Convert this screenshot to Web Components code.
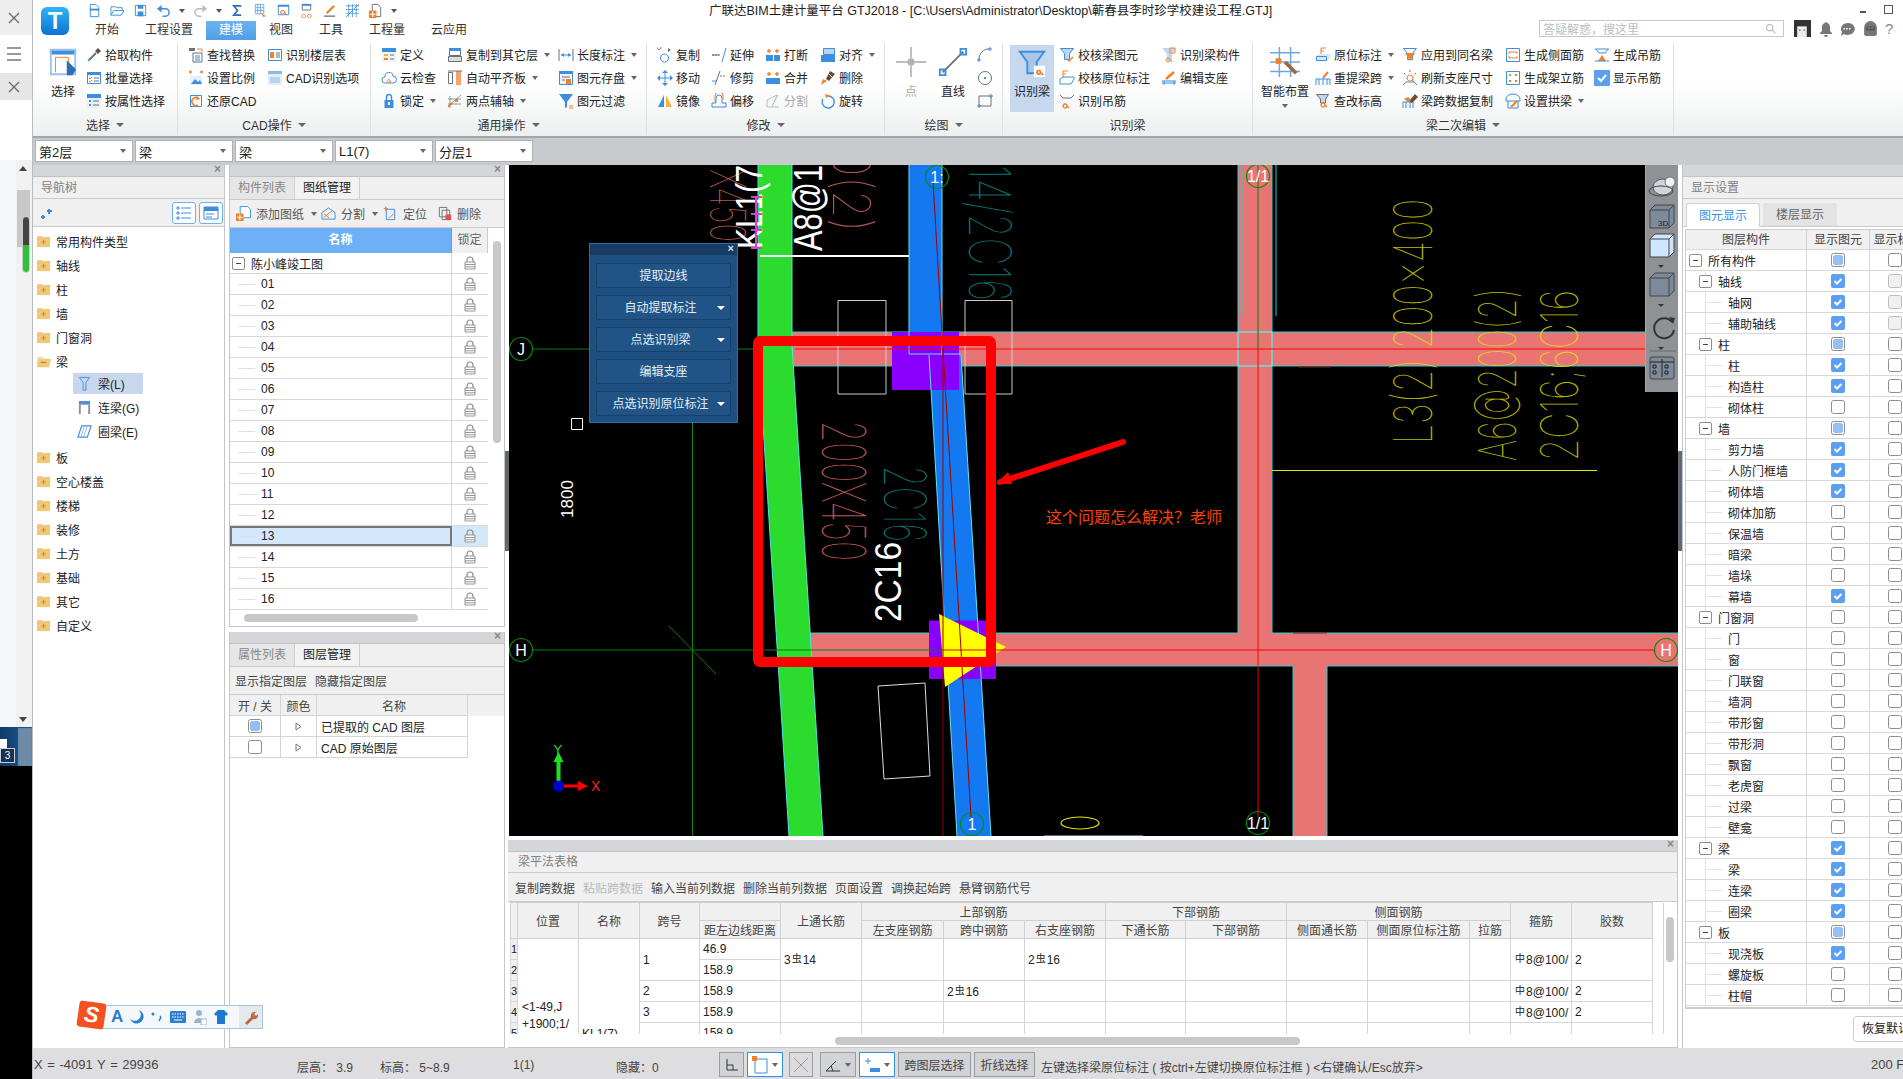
<!DOCTYPE html>
<html lang="zh">
<head>
<meta charset="utf-8">
<title>GTJ2018</title>
<style>
  html, body { margin: 0; height: 100%; overflow: hidden; background: #fff; }
  body { font: 12px "Liberation Sans", "Noto Sans CJK SC", sans-serif; color: #222; }
</style>
</head>
<body>
<gtj-app>
  <gtj-rail slot="rail"></gtj-rail>
  <gtj-titlebar slot="title"></gtj-titlebar>
  <gtj-ribbon slot="ribbon">
    <rb-group label="选择" w="145" pad="7">
      <rb-big icon="select" label="选择" w="46"></rb-big>
      <rb-col>
        <rb-item icon="pick" label="拾取构件"></rb-item>
        <rb-item icon="batch" label="批量选择"></rb-item>
        <rb-item icon="attrsel" label="按属性选择"></rb-item>
      </rb-col>
    </rb-group>
    <rb-group label="CAD操作" w="193" pad="10">
      <rb-col w="79">
        <rb-item icon="replace" label="查找替换"></rb-item>
        <rb-item icon="scale" label="设置比例"></rb-item>
        <rb-item icon="restore" label="还原CAD"></rb-item>
      </rb-col>
      <rb-col>
        <rb-item icon="floortable" label="识别楼层表"></rb-item>
        <rb-item icon="cadopt" label="CAD识别选项"></rb-item>
      </rb-col>
    </rb-group>
    <rb-group label="通用操作" w="276" pad="10">
      <rb-col w="66">
        <rb-item icon="define" label="定义"></rb-item>
        <rb-item icon="cloud" label="云检查"></rb-item>
        <rb-item icon="lockb" label="锁定" arrow></rb-item>
      </rb-col>
      <rb-col w="111">
        <rb-item icon="copyto" label="复制到其它层" arrow></rb-item>
        <rb-item icon="alignslab" label="自动平齐板" arrow></rb-item>
        <rb-item icon="axis2" label="两点辅轴" arrow></rb-item>
      </rb-col>
      <rb-col>
        <rb-item icon="dim" label="长度标注" arrow></rb-item>
        <rb-item icon="save" label="图元存盘" arrow></rb-item>
        <rb-item icon="filter" label="图元过滤"></rb-item>
      </rb-col>
    </rb-group>
    <rb-group label="修改" w="238" pad="10">
      <rb-col w="54">
        <rb-item icon="copy" label="复制"></rb-item>
        <rb-item icon="move" label="移动"></rb-item>
        <rb-item icon="mirror" label="镜像"></rb-item>
      </rb-col>
      <rb-col w="54">
        <rb-item icon="extend" label="延伸"></rb-item>
        <rb-item icon="trim" label="修剪"></rb-item>
        <rb-item icon="offset" label="偏移"></rb-item>
      </rb-col>
      <rb-col w="55">
        <rb-item icon="breaks" label="打断"></rb-item>
        <rb-item icon="merge" label="合并"></rb-item>
        <rb-item icon="split" label="分割" disabled></rb-item>
      </rb-col>
      <rb-col>
        <rb-item icon="alignr" label="对齐" arrow></rb-item>
        <rb-item icon="del" label="删除"></rb-item>
        <rb-item icon="rotate" label="旋转"></rb-item>
      </rb-col>
    </rb-group>
    <rb-group label="绘图" w="118" pad="8">
      <rb-big icon="point" label="点" w="36" disabled></rb-big>
      <rb-big icon="line" label="直线" w="36" ml="6"></rb-big>
      <rb-col w="22" ml="6">
        <rb-item icon="arc"></rb-item>
        <rb-item icon="circle"></rb-item>
        <rb-item icon="rect"></rb-item>
      </rb-col>
    </rb-group>
    <rb-group label="识别梁" w="250" pad="7" plain>
      <rb-big icon="beam" label="识别梁" w="44" active></rb-big>
      <rb-col w="102" ml="5">
        <rb-item icon="checkbeam" label="校核梁图元"></rb-item>
        <rb-item icon="checkorig" label="校核原位标注"></rb-item>
        <rb-item icon="hanger" label="识别吊筋"></rb-item>
      </rb-col>
      <rb-col>
        <rb-item icon="beamcomp" label="识别梁构件"></rb-item>
        <rb-item icon="editsup" label="编辑支座"></rb-item>
      </rb-col>
    </rb-group>
    <rb-group label="梁二次编辑" w="421" pad="7">
      <rb-big icon="smart" label="智能布置" w="50" arrow></rb-big>
      <rb-col w="87" ml="5">
        <rb-item icon="origmark" label="原位标注" arrow></rb-item>
        <rb-item icon="respan" label="重提梁跨" arrow></rb-item>
        <rb-item icon="elev" label="查改标高"></rb-item>
      </rb-col>
      <rb-col w="103">
        <rb-item icon="applysame" label="应用到同名梁"></rb-item>
        <rb-item icon="refresh" label="刷新支座尺寸"></rb-item>
        <rb-item icon="spancopy" label="梁跨数据复制"></rb-item>
      </rb-col>
      <rb-col w="89">
        <rb-item icon="siderebar" label="生成侧面筋"></rb-item>
        <rb-item icon="erect" label="生成架立筋"></rb-item>
        <rb-item icon="arch" label="设置拱梁" arrow></rb-item>
      </rb-col>
      <rb-col>
        <rb-item icon="genhanger" label="生成吊筋"></rb-item>
        <rb-item icon="showcheck" label="显示吊筋"></rb-item>
      </rb-col>
    </rb-group>
  </gtj-ribbon>
  <gtj-combos slot="combos"></gtj-combos>
  <gtj-workspace slot="work">
    <gtj-nav slot="nav"></gtj-nav>
    <gtj-drawings slot="mid"></gtj-drawings>
    <gtj-layers slot="mid"></gtj-layers>
    <gtj-canvas slot="canvas"></gtj-canvas>
    <gtj-beamtable slot="table"></gtj-beamtable>
    <gtj-display slot="right"></gtj-display>
  </gtj-workspace>
  <gtj-status slot="status"></gtj-status>
  <gtj-ime slot="ime"></gtj-ime>
</gtj-app>

<script>
const B = "#3d8ede", O = "#f0802c", K = "#6b7178", L = "#cfe3f8", Y = "#f2b43c";
const line = (d, c = B, w = 1) => `<path d="${d}" fill="none" stroke="${c}" stroke-width="${w}"/>`;
const fill = (d, c = B) => `<path d="${d}" fill="${c}"/>`;

// rough 16x16 versions of the ribbon and tree icons
const ICONS = {
  select: fill("M1 1h14v3H1z") + line("M1.5 1.5h13v13h-13z", "#9cc3ea") + line("M4 5.5h7v8M4 5.5v8", O, .5) + fill("M10 7l5 5-2 3h-3z", "#2f6fb0"),
  pick: line("M3 13l7-7", K, 2) + fill("M9 4l3-3 3 3-3 3z", "#555") + line("M2 14l2-2", B, 1.5),
  batch: line("M1.5 2.5h13v11h-13z") + fill("M1 2h14v3H1z") + line("M3 8l1 1 2-2M3 11l1 1 2-2", O) + line("M8 8h5M8 11h5", K),
  attrsel: fill("M1 1h14v14H1z", "#e8f1fb") + fill("M1 1h14v4H1z") + fill("M3 7h2v2H3zM3 11h2v2H3z") + line("M7 8h6M7 12h6", K),
  replace: fill("M1 1h6v3H1z", K) + line("M9 2h5v3", O) + line("M5 6h9v9H5z", K) + line("M7 9h5M7 11h5M7 13h5", B),
  scale: fill("M2 6h12v9H2z", "#e6f0fa") + fill("M3 14l4-5 3 3 2-2 2 4z", B) + line("M1 2h3M12 2h3", O, 1.5) + line("M2.5 .5v3M13.5 .5v3", O),
  restore: line("M2.5 2.5h11v11h-11z") + line("M11 6a4 4 0 1 0-1 6", O, 1.6) + fill("M9 3l3 3-4 1z", O),
  floortable: fill("M1 2h14v12H1z", "#fff") + line("M1.5 2.5h13v11h-13z") + fill("M3 5h4v6H3z", O) + line("M9 6h4M9 8h4M9 10h4", K),
  cadopt: fill("M1 1h14v14H1z", "#e2edf9") + fill("M1 1h14v3H1z", "#8db9e8") + fill("M3 7h10v6H3z", "#b9d3ef") ,
  define: fill("M1 1h14v14H1z", "#f1f4f7") + fill("M1 1h14v4H1z", B) + fill("M3 7h4v2H3z", Y) + fill("M3 11h4v2H3z", O) + line("M9 8h4M9 12h4", K),
  cloud: line("M4 13a3 3 0 0 1 0-6 4 4 0 0 1 8-1 3.5 3.5 0 0 1 0 7z") + line("M7.5 9.5a1.4 1.4 0 1 0 .1 0M9 11l1 1", O),
  lockb: fill("M3.5 7h9v8h-9z") + line("M5.5 7V4a2.5 2.5 0 0 1 5 0v3", B, 1.5) + fill("M7 9h2v3H7z", "#fff"),
  copyto: line("M2.5 1.5h11v7h-11z", K) + fill("M2 1h12v3H2z", B) + fill("M1 9h14v6H1z", "#d8dde2") + line("M1.5 9.5h13v5h-13z", K),
  alignslab: fill("M9 1h5v14H9z", "#f6a26a") + line("M1.5 2.5h4v11h-4z", K) + line("M1 1h14", K),
  axis2: line("M1 13L14 2M3 3v12M1 6h13M1 11h13", K, .7) + line("M1 14l5-4", O, 1.5) + fill("M8 6h3v3H8z", O),
  dim: line("M1 2v12M15 2v12", K) + line("M3 8h10", B) + fill("M3 8l3-2v4zM13 8l-3-2v4z"),
  save: fill("M1 1h14v14H1z", "#f1f4f7") + line("M1.5 1.5h13v13h-13z") + fill("M1 1h14v3H1z") + line("M4 7h8M4 10h3", K) + fill("M8 9h5v5H8z", O),
  filter: fill("M1 1h14L9 9v5l-2 1V9z") + line("M11 13h4M11 15h4", O),
  copy: line("M2 2.5a2 2 0 1 1 .1 0", K) + line("M7.5 15a4 4 0 1 1 .1 0") + fill("M11 1l3 2-3 2z", K),
  extend: line("M1 8h7", K, 1) + `<path d="M1 8h8" stroke="${K}" stroke-dasharray="2 1"/>` + line("M11 15l4-14"),
  trim: line("M1 11h5", B) + `<path d="M9 6h6" stroke="${K}" stroke-dasharray="2 1"/>` + line("M4 15l5-14", K),
  breaks: fill("M1 8h7v6H1zM9 8h6v6H9z") + line("M4 2v4M2 4h4M12 2v4M10 4h4", O, 1.4),
  merge: fill("M1 8h14v6H1z") + line("M4 2v4M2 4h4M12 2v4M10 4h4", O, 1.4),
  alignr: fill("M3 1h12v7H3z", "#b7d4f2") + line("M3.5 1.5h11v6h-11z") + fill("M1 8h14v7H1z", B),
  move: line("M8 2v12M2 8h12") + fill("M8 0l3 3H5zM8 16l3-3H5zM0 8l3-3v6zM16 8l-3-3v6z"),
  del: fill("M10 1l5 3-6 7-3-2z", "#6b4a33") + line("M9 4l3 3", "#fff") + fill("M1 15l2-6 4 2z", O),
  mirror: fill("M1 14L7 2v12z") + fill("M9 2l6 12H9z", Y),
  offset: line("M1 14V10h4V5a3 3 0 0 1 6 0v5h4v4z") + line("M4 9V3a4 4 0 0 1 8 0v4", O),
  split: line("M2 14h12M2 14V7l10-5-5 12", "#b9bcc0") + line("M9 9l4-7", "#c8cbce", 1.5),
  rotate: line("M8 3a6 6 0 1 1-5 3", B, 1.3) + fill("M5 1l5 1.5L6 5z", O),
  point: line("M8 0v6M8 10v6M0 8h6M10 8h6", "#b9bcc0") + `<circle cx="8" cy="8" r="2" fill="#b0b3b7"/>`,
  line: line("M2.5 13.5l11-11", K) + line("M1 12h3v3H1zM12 1h3v3h-3z"),
  arc: line("M2 13a10 10 0 0 1 11-11", K) + line("M1 12h2v2H1zM12 1h2v2h-2z"),
  circle: `<circle cx="8" cy="8" r="6.5" fill="none" stroke="${K}"/>` + fill("M7 7h2v2H7z"),
  rect: line("M2 3h12v10H2z", K) + line("M1 12h2v2H1zM13 2h2v2h-2z"),
  beam: fill("M1 2h14l-4 6v6H6V8z", "#a9c5e8") + line("M1.5 2.5h13l-4 5.5v6h-5v-6z") + fill("M9 10h6v6H9z", "#fff") + line("M11.5 12.5a1 1 0 1 0 .1 0M13 14l1 1", O),
  checkbeam: fill("M1 1h14l-4 6v5H6V7z", "#bcd8f5") + line("M1.5 1.5h13l-4 5v6h-5v-6z") + line("M8 12l2 2 4-4", O, 1.5),
  checkorig: line("M4 1v6M4 1h5M4 4h3", O) + line("M1 9l3-2h11v2l-3 5H1z") ,
  hanger: line("M1 2l3 3h8l3-3", K) + line("M6 11a2 2 0 1 0 .1 0M8 13l2 2", O, 1.4),
  beamcomp: fill("M1 1h14l-4 6v7H6V7z", "#bcd8f5") + line("M9 1h5v5H9z", O) + line("M7 11a2 2 0 1 0 .1 0M9 13l2 2", O),
  editsup: line("M1 11h14M3 11v4M13 11v4M1 13h14", B) + line("M5 9l8-7", O, 2.4),
  smart: line("M0 3h16M0 8h16M0 13h16M5 0v16M11 0v16", "#6fa8e0", .8) + line("M8 8l6 6", "#9b6a3e", 2) + fill("M3 6h3v3H3z", O),
  origmark: line("M6 1v6M6 1h5M6 4h3", O) + fill("M1 9l3-2h11v5l-3 2H1z", "#d9e8f7") + line("M1.5 9.5h10v4h-10z"),
  respan: line("M1 15V9h14v6M4 9v6M8 9v6M12 9v6") + line("M8 8l5-6", O, 2),
  elev: fill("M1 1h13l-3 5v4H5V6z", "#c7d6e8") + line("M1.5 1.5h12l-3 4.5v4h-5V6z", K) + line("M8 10a2 2 0 1 0 .1 0M10 12l2 2", O, 1.4),
  applysame: line("M1.5 1.5h13l-4 5v6h-5v-6z", B) + fill("M3 6h10l-5 8z", O),
  refresh: line("M8 0v2M2 3l1.5 1.5M14 3l-1.5 1.5", K) + line("M1 15l3-3h8l3 3", B) + line("M8 5a3 3 0 1 0 .1 0M10 10l2 2", O, 1.2),
  spancopy: line("M1 15V9h10v6M4 9v6M8 9v6", B) + fill("M7 8l6-7 3 3-6 6z", "#6b4a33") + fill("M2 6l4-2 3 3-3 2z", O),
  siderebar: line("M1.5 1.5h13v13h-13z") + line("M4 5h8M4 11h8", O) + line("M4 5v2M12 5v2M4 11V9M12 11V9", O),
  erect: line("M1.5 1.5h13v13h-13z") + fill("M4 4h2v2H4zM10 4h2v2h-2zM4 10h2v2H4zM10 10h2v2h-2z", O),
  arch: line("M1 6a7 5 0 0 1 14 0v2H1zM3 8v7h10V8") + line("M6 14l6-6", O, 2),
  genhanger: line("M1 2h14M2 2l3 4h6l3-4", B) + fill("M4 14h8l-4-6z", O) + line("M1 14h14", B),
  showcheck: fill("M1 0h14a1 1 0 0 1 1 1v14a1 1 0 0 1-1 1H1a1 1 0 0 1-1-1V1a1 1 0 0 1 1-1z", "#5a9ff0") + line("M4 8l3 3 5-6", "#fff", 2),
  folder: fill("M1 2h6v2H1z", "#f7dca4") + fill("M1 3h14v11H1z", "#f1c878") + line("M8 6v5M5.5 8.5h5", "#e28b2a", 1.2),
  folderopen: fill("M1 3h7v2H1z", "#f7dca4") + fill("M2 5h14l-2 9H1z", "#f1c878") + line("M5 9h6", "#c98628", 1.4),
  beamL: fill("M2 1h12l-4 6v8H6V7z", "#bcd8f5") + line("M2.5 1.5h11l-4 5.5v8h-3V7z", "#4a90d9") ,
  beamG: fill("M2 1h12v4H2z", "#5b8fc8") + line("M3 5v10M13 5v10", "#8a9097", 2),
  beamE: line("M5 2h10l-4 12H1z", "#4a90d9", 1.3) + line("M8 2L4 14M11 2L7 14", "#8fbce8"),
  add: fill("M4 0h9l3 3v10H4z", "#fff") + line("M4.5 .5h8l3 3v9h-11z") + fill("M0 8h8v8H0z", O) + line("M4 9v6M1 12h6", "#fff", 1.3),
  cut: line("M1 14V7l7-5 7 5v7z") + line("M3 12l9-7M3 8l6 5", O),
  locate: fill("M3 3h10v12H3z", "#e4eff9") + line("M3.5 3.5h9v11h-9z") + line("M6 13l6-5", O) + fill("M3 0l1 2 2 .5-2 1L3 6 2 3.5 0 2.5l2-.5z", O),
  erase: line("M2.5 1.5h8v10h-8z", K) + line("M5.5 4.5h8v10h-8z", K) + fill("M9 9h6v6H9z", "#e2504f"),
  avatar: fill("M0 0h17v17H0z", "#333") + fill("M3 6h9v11H3z", "#eee") + fill("M5 9h1v1H5zM9 9h1v1H9z", "#222"),
  bell: fill("M8 1a1 1 0 0 1 1 1 4 4 0 0 1 3 4v4l2 2v1H2v-1l2-2V6a4 4 0 0 1 3-4 1 1 0 0 1 1-1zM6 14h4a2 2 0 0 1-4 0z", "#777"),
  chat: fill("M8 2a7 6 0 1 1-3 11l-3 2 1-4A7 6 0 0 1 8 2z", "#777") + fill("M4.5 7h1.5v1.500H4.500zM7.300 7h1.500v1.500H7.300zM10 7h1.500v1.500H10z", "#fff"),
  monster: fill("M8 1a6 6 0 0 1 6 6v7l-2 1H4l-2-1V7a6 6 0 0 1 6-6z", "#777") + fill("M4 6h8v4H4z", "#555") + fill("M6 7h1v1H6zM9 7h1v1H9z", "#ddd"),
  glass: line("M7 3a4 4 0 1 0 .1 0M10 10l4 4", "#bbb", 1.4),
  qnew: fill("M3 1h7l3 3v11H3z", "#fff") + line("M3.500 1.500h6l3 3v10h-9z") + fill("M3 6h10v2H3z"),
  qopen: line("M1 13V4h5l1 1h6v3") + line("M1 13l3-5h11l-3 5z"),
  qsave: line("M2.500 2.500h11v11h-11z") + fill("M5 2h6v4H5zM5 9h6v5H5z"),
  qundo: line("M2 6h8a4 4 0 0 1 0 8H7", B, 1.600) + fill("M6 2v8L1 6z"),
  qredo: line("M14 6H6a4 4 0 0 0 0 8h3", "#b6bcc4", 1.600) + fill("M10 2v8l5-4z", "#b6bcc4"),
  qcalc: line("M12 3H4l4 5-4 5h8", "#2f6fb0", 1.800),
  qbuild: line("M2.500 1.500h9v10h-9zM5 1.500v10M8 1.500v10M2.500 5h9M2.500 8h9", B, .7) + fill("M9 11l5 3-3 1z", O),
  qview: line("M2.500 2.500h11v10h-11z") + fill("M2 2h12v2H2z") + line("M7 8a2 2 0 1 0 .1 0M9 10l2 2", O, 1.200),
  qglass: line("M3.500 1.500h9v6h-9z", K) + line("M5 12a2 2 0 1 0 .1 0M11 12a2 2 0 1 0 .1 0", O) + fill("M3 1h10v2H3z", B),
  qpen: line("M2 14h12", K, 1.400) + line("M5 11l8-8", O, 2.400),
  qgrid: line("M1 3h14M1 7h14M1 11h14M4 1v14M8 1v14M12 1v14", B, .8) + line("M1 15L15 1", B, .8),
  qfile: line("M4.500 1.500h6l3 3v10h-9z", K) + fill("M1 8h8v8H1z", O) + line("M5 9v6M2 12h6", "#fff", 1.200)
};

class GtjBase extends HTMLElement {
  constructor() {
    super();
    this.attachShadow({ mode: "open" });
  }
}

class GtjIcon extends GtjBase {
  connectedCallback() {
    const size = this.getAttribute("size") || 16;
    this.shadowRoot.innerHTML = `
      <style>:host { display: inline-flex; flex: none; width: ${size}px; height: ${size}px; } svg { display: block; }</style>
      <svg width="${size}" height="${size}" viewBox="0 0 16 16">${ICONS[this.getAttribute("name")] || ""}</svg>`;
  }
}

class GtjCheck extends GtjBase {
  connectedCallback() {
    const s = this.getAttribute("state") || "off";
    const inner = {
      off: `<rect x=".5" y=".5" width="13" height="13" rx="2" fill="#fff" stroke="#8d8d8d"/>`,
      dis: `<rect x=".5" y=".5" width="13" height="13" rx="2" fill="#f0f0f0" stroke="#bdbdbd"/>`,
      part: `<rect x=".5" y=".5" width="13" height="13" rx="2" fill="#fff" stroke="#8d8d8d"/><rect x="2.500" y="2.500" width="9" height="9" rx="1.500" fill="#93c0f8" stroke="#6ea5ea" stroke-width=".6"/>`,
      on: `<rect width="14" height="14" rx="2" fill="#5a9ff0"/><path d="M3.500 7l2.500 2.500 4.500-4.500" fill="none" stroke="#fff" stroke-width="2"/>`
    }[s];
    this.shadowRoot.innerHTML = `
      <style>:host { display: inline-flex; flex: none; width: 14px; height: 14px; }</style>
      <svg width="14" height="14" viewBox="0 0 14 14">${inner}</svg>`;
  }
}

class GtjApp extends GtjBase {
  constructor() {
    super();
    this.shadowRoot.innerHTML = `
      <style>
        :host { display: grid; position: relative; width: 1903px; height: 1079px; overflow: hidden;
          grid-template-columns: 33px 1fr; grid-template-rows: 40px 98px 27px 883px 31px; }
        #rail { grid-row: 1 / 6; }
        .cell { min-width: 0; min-height: 0; display: block; }
      </style>
      <div id="rail" class="cell"><slot name="rail"></slot></div>
      <div class="cell"><slot name="title"></slot></div>
      <div class="cell"><slot name="ribbon"></slot></div>
      <div class="cell"><slot name="combos"></slot></div>
      <div class="cell"><slot name="work"></slot></div>
      <div class="cell"><slot name="status"></slot></div>
      <slot name="ime"></slot>`;
  }
}

class GtjRail extends GtjBase {
  constructor() {
    super();
    const x = `<svg width="14" height="14" viewBox="0 0 14 14"><path d="M2 2l10 10M12 2L2 12" stroke="#666" stroke-width="1.200"/></svg>`;
    this.shadowRoot.innerHTML = `
      <style>
        :host { display: flex; flex-direction: column; height: 100%; background: #000; border-right: 1px solid #b9bcc0; box-sizing: border-box; }
        .b { display: flex; align-items: center; justify-content: center; padding-right: 4px; }
        #track { height: 567px; flex: none; display: flex; background: #fff; }
        #l { width: 16px; background: #f5f7fa; }
        #r { width: 16px; background: #f1f1f1; position: relative; }
        #thumb { position: absolute; left: 1px; top: 30px; width: 13px; height: 57px; background: #c8c8c8; }
        #ctl { position: absolute; left: 6px; top: 56px; width: 8px; height: 57px; border-radius: 4px; background: linear-gradient(#444 50%, #2fbf3a 50%); border: 1px solid #ccc; box-sizing: border-box; }
        .ar { position: absolute; left: 3px; width: 0; height: 0; border: 4px solid transparent; }
        #up { top: 6px; border-bottom: 5px solid #444; border-top: 0; }
        #down { bottom: 5px; border-top: 5px solid #444; border-bottom: 0; }
        #task { height: 39px; flex: none; background: linear-gradient(90deg, #0f3a68, #1d5c97); position: relative; color: #fff; font-size: 10px; }
        #task b { position: absolute; left: 0; top: 21px; width: 13px; height: 13px; border: 1px solid #ccd; background: #17324f; text-align: center; line-height: 13px; font-weight: 400; }
        #task i { position: absolute; left: 0; top: 12px; width: 7px; height: 10px; background: #fff; }
        #task u { position: absolute; left: 18px; top: 1px; width: 12px; height: 36px; border: 1px solid #5f87ad; background: #6d8aa6; }
      </style>
      <div class="b" style="height:35px;background:#eee">${x}</div>
      <div class="b" style="height:38px;background:#fff"><svg width="16" height="14" viewBox="0 0 16 14"><path d="M1 1h14M1 7h14M1 13h14" stroke="#333"/></svg></div>
      <div class="b" style="height:27px;background:#e6e6e6">${x}</div>
      <div style="height:60px;flex:none;background:#fff"></div>
      <div id="track"><div id="l"></div><div id="r"><div id="thumb"></div><div id="ctl"></div><div class="ar" id="up"></div><div class="ar" id="down"></div></div></div>
      <div id="task"><i></i><b>3</b><u></u></div>`;
  }
}

class GtjTitlebar extends GtjBase {
  constructor() {
    super();
    const q = ["qnew","qopen","qsave","qundo","~","qredo","~","qcalc","qbuild","qview","qglass","qpen","qgrid","qfile","~"];
    const tabs = [["开始",50],["工程设置",74],["建模",50],["视图",50],["工具",50],["工程量",62],["云应用",62]];
    this.shadowRoot.innerHTML = `
      <style>
        :host { display: flex; height: 40px; background: #fff; }
        #logo { width: 49px; flex: none; padding: 7px 0 0 8px; box-sizing: border-box; }
        #mark { width: 28px; height: 28px; border-radius: 6px; background: linear-gradient(#31b4f2, #0d72d8); color: #e8fbff; font: 700 24px/28px "Liberation Sans", sans-serif; text-align: center; }
        #main { flex: 1; display: flex; flex-direction: column; position: relative; }
        #top { height: 21px; display: flex; align-items: center; }
        #qa { width: 304px; margin-left: 5px; display: flex; align-items: center; gap: 8px; flex: none; }
        #qa i { width: 0; height: 0; margin: 0; border: 3px solid transparent; border-top: 4px solid #555; border-bottom: 0; }
        #ttl { margin-left: 318px; white-space: nowrap; font-size: 12.500px; color: #222; transform: translateY(-1px); }
        #min { position: absolute; left: 1778px; top: 11px; width: 6px; height: 2px; background: #555; }
        #res { position: absolute; left: 1802px; top: 5px; width: 7px; height: 7px; border: 1px solid #555; }
        #tabs { display: flex; height: 19px; }
        .t { text-align: center; line-height: 19px; color: #333; }
        .t.on { background: linear-gradient(#6cb2f0, #519fe6); color: #fff; }
        #tools { position: absolute; left: 1457px; top: 20px; display: flex; align-items: center; }
        #search { height: 15px; border: 1px solid #c8c8c8; display: flex; align-items: center; justify-content: space-between; padding: 0 6px 0 3px; width: 234px; color: #bdbdbd; margin-right: 10px; }
      </style>
      <div id="logo"><div id="mark">T</div></div>
      <div id="main">
        <div id="top">
          <div id="qa">${q.map(n => n === "~" ? "<i></i>" : `<gtj-icon name="${n}" size="15"></gtj-icon>`).join("")}</div>
          <div id="ttl">广联达BIM土建计量平台 GTJ2018 - [C:\\Users\\Administrator\\Desktop\\蕲春县李时珍学校建设工程.GTJ]</div>
        </div>
        <div id="tabs">${tabs.map(([t, w]) => `<div class="t ${t === "建模" ? "on" : ""}" style="width:${w}px">${t}</div>`).join("")}</div>
        <div id="min"></div><div id="res"></div>
        <div id="tools">
          <div id="search"><span>答疑解惑，搜这里</span><gtj-icon name="glass" size="13"></gtj-icon></div>
          <gtj-icon name="avatar" size="17"></gtj-icon>
          <gtj-icon name="bell" size="16" style="margin-left:7px"></gtj-icon>
          <gtj-icon name="chat" size="16" style="margin-left:5px"></gtj-icon>
          <gtj-icon name="monster" size="17" style="margin-left:7px"></gtj-icon>
          <span style="margin-left:6px;font-size:15px;color:#888">?</span>
        </div>
      </div>`;
  }
}

class GtjRibbon extends GtjBase {
  constructor() {
    super();
    this.shadowRoot.innerHTML = `
      <style>
        :host { display: flex; height: 98px; box-sizing: border-box; background: linear-gradient(#fff 45%, #edf0f0); border-bottom: 2px solid #a2a6aa; }
      </style>
      <slot></slot>`;
  }
}

class RbGroup extends GtjBase {
  connectedCallback() {
    const pad = this.getAttribute("pad") || 8;
    const plain = this.hasAttribute("plain");
    this.shadowRoot.innerHTML = `
      <style>
        :host { display: flex; flex-direction: column; flex: none; width: ${this.getAttribute("w")}px; box-sizing: border-box; border-right: 1px solid #dfe2e3; height: 92px; margin-top: 3px; }
        #body { display: flex; height: 69px; padding-left: ${pad}px; }
        #lab { height: 25px; display: flex; align-items: center; justify-content: center; gap: 6px; color: #333; transform: translateY(1px); }
        i { width: 0; height: 0; border: 4px solid transparent; border-top: 4px solid #666; border-bottom: 0; }
      </style>
      <div id="body"><slot></slot></div>
      <div id="lab"><span>${this.getAttribute("label")}</span>${plain ? "" : "<i></i>"}</div>`;
  }
}

class RbBig extends GtjBase {
  connectedCallback() {
    const on = this.hasAttribute("active");
    const off = this.hasAttribute("disabled");
    this.shadowRoot.innerHTML = `
      <style>
        :host { display: flex; flex-direction: column; align-items: center; flex: none; height: 67px; margin-top: 2px;
          width: ${this.getAttribute("w")}px; margin-left: ${this.getAttribute("ml") || 0}px; background: ${on ? "#c7d7ee" : "transparent"}; }
        gtj-icon { margin-top: 2px; }
        span { margin-top: 5px; white-space: nowrap; color: ${off ? "#aaa" : "#222"}; }
        i { margin-top: 5px; width: 0; height: 0; border: 3px solid transparent; border-top: 4px solid #666; border-bottom: 0; }
      </style>
      <gtj-icon name="${this.getAttribute("icon")}" size="30"></gtj-icon>
      <span>${this.getAttribute("label")}</span>${this.hasAttribute("arrow") ? "<i></i>" : ""}`;
  }
}

class RbCol extends GtjBase {
  connectedCallback() {
    const w = this.getAttribute("w");
    this.shadowRoot.innerHTML = `
      <style>:host { display: flex; flex-direction: column; flex: none; ${w ? `width:${w}px;` : ""} margin-left: ${this.getAttribute("ml") || 0}px; }</style>
      <slot></slot>`;
  }
}

class RbItem extends GtjBase {
  connectedCallback() {
    const off = this.hasAttribute("disabled");
    const label = this.getAttribute("label");
    this.shadowRoot.innerHTML = `
      <style>
        :host { display: flex; align-items: center; height: 23px; gap: 3px; white-space: nowrap; color: ${off ? "#aaa" : "#222"}; }
        i { margin-left: 3px; width: 0; height: 0; border: 3px solid transparent; border-top: 4px solid #666; border-bottom: 0; }
      </style>
      <gtj-icon name="${this.getAttribute("icon")}"></gtj-icon>${label ? `<span>${label}</span>` : ""}${this.hasAttribute("arrow") ? "<i></i>" : ""}`;
  }
}

class GtjCombos extends GtjBase {
  constructor() {
    super();
    const items = ["第2层", "梁", "梁", "L1(7)", "分层1"];
    this.shadowRoot.innerHTML = `
      <style>
        :host { display: flex; height: 27px; box-sizing: border-box; padding: 2px 0 3px 2px; gap: 2px; background: #c8cacd; }
        div { width: 98px; box-sizing: border-box; background: #fff; border: 1px solid #aeb1b4; display: flex; align-items: center; justify-content: space-between; padding: 0 6px 0 3px; font-size: 13px; }
        i { width: 0; height: 0; border: 3px solid transparent; border-top: 4px solid #666; border-bottom: 0; }
      </style>
      ${items.map(t => `<div><span>${t}</span><i></i></div>`).join("")}`;
  }
}

class GtjWorkspace extends GtjBase {
  constructor() {
    super();
    this.shadowRoot.innerHTML = `
      <style>
        :host { display: flex; height: 883px; background: #fff; }
        #nav { width: 192px; flex: none; }
        #mid { width: 276px; flex: none; margin-left: 4px; display: flex; flex-direction: column; gap: 5px; }
        #center { width: 1177px; flex: none; position: relative; display: flex; flex-direction: column; gap: 4px; }
        #right { width: 221px; flex: none; }
        .hl { position: absolute; width: 4px; height: 100px; background: #5e6a70; top: 286px; }
      </style>
      <div id="nav"><slot name="nav"></slot></div>
      <div id="mid"><slot name="mid"></slot></div>
      <div id="center">
        <slot name="canvas"></slot>
        <slot name="table"></slot>
        <div class="hl" style="left:0"></div>
        <div class="hl" style="left:1173px"></div>
      </div>
      <div id="right"><slot name="right"></slot></div>`;
  }
}

const STRIP = `
  .strip { height: 11px; background: #d4d6da; border-bottom: 1px solid #c0c2c5; position: relative; flex: none; }
  .strip::after { content: "×"; position: absolute; right: 3px; top: -3px; font: 700 12px/14px "Liberation Sans", sans-serif; color: #888; }
  .ttl { height: 21px; line-height: 22px; background: #f0f0f0; border-bottom: 1px solid #c8cacc; color: #808080; padding-left: 8px; flex: none; }
  .tabs { display: flex; height: 22px; background: #f0f0f0; border-bottom: 1px solid #c8cacc; flex: none; }
  .tabs div { width: 65px; text-align: center; line-height: 22px; color: #888; background: #e6e6e6; border-right: 1px solid #d0d0d0; box-sizing: border-box; }
  .tabs div.on { background: #f2f2f2; color: #222; }
`;

class GtjNav extends GtjBase {
  constructor() {
    super();
    const top = ["常用构件类型","轴线","柱","墙","门窗洞"];
    const rest = ["板","空心楼盖","楼梯","装修","土方","基础","其它","自定义"];
    const row = (t, icon = "folder") => `<div class="r"><gtj-icon name="${icon}" size="15"></gtj-icon><span>${t}</span></div>`;
    const sub = (t, icon, sel) => `<div class="s ${sel ? "on" : ""}"><gtj-icon name="${icon}" size="15"></gtj-icon><span>${t}</span></div>`;
    this.shadowRoot.innerHTML = `
      <style>
        :host { display: flex; flex-direction: column; height: 883px; box-sizing: border-box; border-right: 1px solid #c4c6c8; }
        ${STRIP}
        #bar { height: 27px; background: #f0f0f0; border-bottom: 1px solid #c8cacc; display: flex; align-items: center; padding: 0 1px 0 7px; flex: none; }
        .btn { width: 22px; height: 20px; border: 1px solid #6fb0f0; border-radius: 3px; background: #fff; display: flex; align-items: center; justify-content: center; margin-left: 3px; }
        #tree { padding-top: 2px; }
        .r { display: flex; align-items: center; height: 24px; padding-left: 3px; gap: 5px; }
        .s { display: flex; align-items: center; height: 21px; width: 70px; margin: 0 0 3px 40px; padding-left: 4px; box-sizing: border-box; gap: 6px; white-space: nowrap; }
        .s.on { background: #c7d7ee; }
      </style>
      <div class="strip"></div>
      <div class="ttl">导航树</div>
      <div id="bar">
        <svg width="14" height="12" viewBox="0 0 14 12" style="margin-right:auto"><path d="M3 8v4M1 10h4M9 2v5M7 4h5" stroke="#3d8ede" stroke-width="2"/></svg>
        <div class="btn"><svg width="16" height="14" viewBox="0 0 16 14"><path d="M1 1h2v2H1zM1 6h2v2H1zM1 11h2v2H1z" fill="none" stroke="#3d8ede"/><path d="M5 2h10M5 7h10M5 12h10" stroke="#3d8ede"/></svg></div>
        <div class="btn"><svg width="16" height="14" viewBox="0 0 16 14"><path d="M1 1h14v12H1z" fill="none" stroke="#3d8ede"/><path d="M1 1h14v4H1z" fill="#3d8ede"/><path d="M3 8h8M3 11h6" stroke="#3d8ede"/></svg></div>
      </div>
      <div id="tree">
        ${top.map(t => row(t)).join("")}
        ${row("梁", "folderopen")}
        ${sub("梁(L)", "beamL", true)}${sub("连梁(G)", "beamG")}${sub("圈梁(E)", "beamE")}
        ${rest.map(t => row(t)).join("")}
      </div>`;
  }
}

class GtjDrawings extends GtjBase {
  constructor() {
    super();
    const nums = Array.from({ length: 16 }, (_, i) => String(i + 1).padStart(2, "0"));
    const lock = `<svg width="12" height="14" viewBox="0 0 12 14"><path d="M3 6V4a3 3 0 0 1 6 0v2" fill="none" stroke="#8a8a8a" stroke-width="1.200"/><path d="M1 6h10v7H1zM1 8.500h10M1 10.800h10" fill="#fff" stroke="#8a8a8a" stroke-width=".9"/></svg>`;
    const tool = (icon, t, w, arrow) => `<div class="tl" style="width:${w}px"><gtj-icon name="${icon}" size="15"></gtj-icon><span>${t}</span>${arrow ? "<i></i>" : ""}</div>`;
    this.shadowRoot.innerHTML = `
      <style>
        :host { display: flex; flex-direction: column; height: 462px; box-sizing: border-box; border: 1px solid #c4c6c8; border-top: 0; position: relative; }
        ${STRIP}
        #bar { height: 28px; background: #f0f0f0; border-bottom: 1px solid #c8cacc; display: flex; align-items: center; padding-left: 6px; box-sizing: border-box; flex: none; }
        .tl { display: flex; align-items: center; gap: 5px; color: #555; flex: none; }
        .tl i { width: 0; height: 0; margin-left: 2px; border: 3px solid transparent; border-top: 4px solid #666; border-bottom: 0; }
        #tb { width: 258px; }
        .row { display: grid; grid-template-columns: 222px 36px; height: 21px; box-sizing: border-box; border-bottom: 1px solid #d8d8d8; }
        .row.h { height: 25px; border: 0; text-align: center; line-height: 25px; }
        .row.h div:first-child { background: #6db0f5; color: #fff; font-weight: 700; border-right: 1px solid #5f9fe0; }
        .row.h div:last-child { background: #f0f0f0; color: #666; border-right: 1px solid #ccc; }
        .n { border-right: 1px solid #d8d8d8; display: flex; align-items: center; padding-left: 8px; position: relative; }
        .n u { width: 17px; height: 1px; background: #e0e0e0; margin-right: 6px; }
        .l { display: flex; align-items: center; justify-content: center; }
        .row.sel { background: #d4e8fc; }
        .row.sel .n { outline: 2px solid #777; outline-offset: -2px; }
        .box { width: 11px; height: 11px; border: 1px solid #8d8d8d; border-radius: 2px; margin: 0 6px 0 -6px; position: relative; }
        .box::after { content: ""; position: absolute; left: 3px; top: 5px; width: 5px; height: 1px; background: #444; }
        #v { position: absolute; left: 263px; top: 76px; width: 8px; height: 202px; background: #c8c8c8; border-radius: 4px; }
        #hs { position: absolute; left: 14px; top: 449px; width: 174px; height: 8px; background: #c8c8c8; border-radius: 4px; }
      </style>
      <div class="strip"></div>
      <div class="tabs"><div>构件列表</div><div class="on">图纸管理</div></div>
      <div id="bar">${tool("add", "添加图纸", 85, true)}${tool("cut", "分割", 62, true)}${tool("locate", "定位", 54)}${tool("erase", "删除", 50)}</div>
      <div id="tb">
        <div class="row h"><div>名称</div><div>锁定</div></div>
        <div class="row"><div class="n"><span class="box"></span>陈小峰竣工图</div><div class="l">${lock}</div></div>
        ${nums.map(n => `<div class="row ${n === "13" ? "sel" : ""}"><div class="n"><u></u>${n}</div><div class="l">${lock}</div></div>`).join("")}
      </div>
      <div id="v"></div><div id="hs"></div>`;
  }
}

class GtjLayers extends GtjBase {
  constructor() {
    super();
    const tri = `<svg width="7" height="9" viewBox="0 0 7 9"><path d="M1 1l5 3.500-5 3.500z" fill="#fff" stroke="#777"/></svg>`;
    this.shadowRoot.innerHTML = `
      <style>
        :host { display: flex; flex-direction: column; height: 416px; box-sizing: border-box; border: 1px solid #c4c6c8; border-top: 0; }
        ${STRIP}
        #bar { height: 28px; background: #f0f0f0; border-bottom: 1px solid #c8cacc; display: flex; align-items: center; padding-left: 5px; gap: 8px; color: #444; flex: none; box-sizing: border-box; }
        .g { display: grid; grid-template-columns: 51px 36px 151px; height: 21px; box-sizing: border-box; }
        .g > div { border-right: 1px solid #d4d4d4; border-bottom: 1px solid #d4d4d4; display: flex; align-items: center; justify-content: center; }
        .g > div:last-child { justify-content: flex-start; padding-left: 4px; }
        .hd { background: #f0f0f0; color: #444; }
        .hd > div:last-child { justify-content: center !important; }
      </style>
      <div class="strip"></div>
      <div class="tabs"><div>属性列表</div><div class="on">图层管理</div></div>
      <div id="bar"><span>显示指定图层</span><span>隐藏指定图层</span></div>
      <div class="g hd"><div>开 / 关</div><div>颜色</div><div>名称</div></div>
      <div class="g"><div><gtj-check state="part"></gtj-check></div><div>${tri}</div><div>已提取的 CAD 图层</div></div>
      <div class="g"><div><gtj-check></gtj-check></div><div>${tri}</div><div>CAD 原始图层</div></div>`;
  }
}

class GtjPopup extends GtjBase {
  constructor() {
    super();
    const btn = (t, a) => `<div class="b">${t}${a ? "<i></i>" : ""}</div>`;
    this.shadowRoot.innerHTML = `
      <style>
        :host { position: absolute; left: 80px; top: 78px; width: 149px; height: 180px; box-sizing: border-box; background: #1d4f80; border: 1px solid #2f6ba5; color: #e6edf5; }
        #h { height: 11px; background: #173d66; position: relative; }
        #h::after { content: "×"; position: absolute; right: 3px; top: -2px; color: #dde; font: 700 11px/13px "Liberation Sans", sans-serif; }
        #l { display: flex; flex-direction: column; gap: 7px; padding: 8px 6px; }
        .b { height: 25px; line-height: 24px; box-sizing: border-box; background: #215486; border: 1px solid #184068; border-radius: 2px; text-align: center; position: relative; padding-right: 6px; }
        .b:first-child, .b:nth-child(4) { padding-right: 0; }
        i { position: absolute; right: 5px; top: 10px; width: 0; height: 0; border: 4px solid transparent; border-top: 4px solid #fff; border-bottom: 0; }
      </style>
      <div id="h"></div>
      <div id="l">${btn("提取边线")}${btn("自动提取标注", 1)}${btn("点选识别梁", 1)}${btn("编辑支座")}${btn("点选识别原位标注", 1)}</div>`;
  }
}

class GtjCanvas extends GtjBase {
  constructor() {
    super();
    const bubble = (x, y, t) => `<circle cx="${x}" cy="${y}" r="11.500" fill="none" stroke="#0a8a0a" stroke-width="1.200"/><text x="${x}" y="${y + 6}" text-anchor="middle" font-size="16" fill="#fff">${t}</text>`;
    // rotated drawing annotations: up reads bottom to top, down reads top to bottom
    const up = (x, y, len, size, col, t, cls = "thin") => `<text class="${cls}" transform="translate(${x} ${y}) rotate(-90)" textLength="${len}" lengthAdjust="spacingAndGlyphs" font-size="${size}" fill="${col}">${t}</text>`;
    const down = (x, y, len, size, col, t) => `<text class="thin" transform="translate(${x} ${y}) rotate(90)" textLength="${len}" lengthAdjust="spacingAndGlyphs" font-size="${size}" fill="${col}">${t}</text>`;
    const CY = "#20d0d0", PK = "#e97474", RED = "#ff0000", GR = "#0b7f0b";
    this.shadowRoot.innerHTML = `
      <style>
        :host { display: block; position: relative; flex: none; margin-left: 4px; width: 1169px; height: 671px; background: #000; overflow: hidden; }
        svg { display: block; position: absolute; left: 0; top: 0; }
        text { font-family: "Liberation Sans", "Noto Sans CJK SC", sans-serif; }
        .thin { font-family: Inter, "Liberation Sans", sans-serif; font-weight: 100; fill-opacity: .82; }
      </style>
      <svg width="1169" height="671" viewBox="509 165 1169 671">
        <!-- pink beams -->
        <path d="M1238 165h34v167h-34zM1238 366h34v267h-34zM1293 666h34v170h-34z" fill="${PK}"/>
        <path d="M790 332H1678V366H790zM808 633H1678V666H808z" fill="${PK}"/>
        <path d="M790 332H1678M790 366H1678M808 633H1238M1272 633H1678M808 666H1293M1327 666H1678M1238 165V633M1272 165V633M1293 666V836M1327 666V836M1242 165V316M1276 165V316" stroke="${CY}" fill="none"/>
        <path d="M1238 332h34v34h-34z" fill="none" stroke="#9be0e0"/>
        <path d="M1298 367h33M1293 633h34" stroke="#8b1a1a" stroke-width="1"/>
        <!-- green and blue slanted beams -->
        <path d="M758 165H792V345L823 836H789L758 345Z" fill="#2bdc2f"/>
        <path d="M758 165V345L789 836M792 165V345L823 836" stroke="#49e5e5" fill="none"/>
        <path d="M909 165H942V354H909Z" fill="#1478f0"/>
        <path d="M929 355H961L991 836H957Z" fill="#1478f0"/>
        <path d="M892 332h67v58h-67zM929 620.500h67v58.500h-67z" fill="#8a00ff"/>
        <path d="M909 165V354H961M942 165V354M929 355L957 836M961 355L991 836" stroke="#63dff0" fill="none"/>
        <path d="M939 614L1006 647L945 687Z" fill="#ffff00"/>
        <!-- axes -->
        <path d="M533 349H758M533 650H942M692.500 423V836M669 626L716 674" stroke="${GR}" fill="none"/>
        <path d="M795 349H1645M942 650H1654" stroke="${RED}" fill="none"/>
        <path d="M1258 165V349" stroke="${GR}"/>
        <path d="M1258 349V817" stroke="${RED}"/>
        <path d="M943 349V836" stroke="#a00000"/>
        <path d="M933 182L971 817" stroke="#a00000"/>
        ${bubble(521, 349, "J")}${bubble(521, 650, "H")}${bubble(1666, 650, "H")}
        ${bubble(937, 177, "1:")}${bubble(972, 824, "1")}${bubble(1258, 176, "1/1")}${bubble(1258, 823, "1/1")}
        <!-- white outlines -->
        <path d="M760 256H909" stroke="#fff" stroke-width="2"/>
        <path d="M838 300.500h48v93.500h-48zM965 300.500h47v93.500h-47z" fill="none" stroke="#ccc"/>
        <path d="M878 686L925 683L930 776L884 779Z" fill="none" stroke="#ddd"/>
        <path d="M571.500 418.500h11v11h-11z" fill="#000" stroke="#fff"/>
        <!-- annotations -->
        ${up(1432, 444, 245, 53, "#e6e600", "L3(2) 200x400")}
        ${up(1516, 461, 173, 52, "#e6e600", "A6@200(2)")}
        ${up(1578, 461, 171, 52, "#e6e600", "2C16;6C16")}
        <path d="M1272 470.500H1597" stroke="#e6e600"/>
        <ellipse cx="1080" cy="823" rx="19" ry="6" fill="none" stroke="#e6e600" stroke-width="1.200"/>
        ${down(710, 169, 73, 49, "#e06a6a", "X450")}
        ${down(833, 150, 82, 52, "#e06a6a", "0(2)")}
        ${down(969, 165, 136, 58, "#0f8f8f", "14/2C16")}
        ${down(822, 421, 140, 60, "#e06a6a", "200X450")}
        ${down(884, 466, 76, 58, "#0f8f8f", "2C16")}
        ${up(762, 249, 84, 36, "#fff", "KL1(7", "")}
        <path d="M756 197V248M751 197h11M751 214h11M751 230h11M751 248h11" stroke="#d63fd0" stroke-width="2" fill="none"/>
        ${up(822, 251, 86, 40, "#fff", "A8@1", "")}
        ${up(901, 622, 80, 36, "#fff", "2C16", "")}
        ${up(573, 518, 38, 17, "#fff", "1800", "")}
        <text x="1046" y="523" font-size="16" fill="#ff4000">这个问题怎么解决？老师</text>
        <!-- red mark up -->
        <rect x="758" y="341" width="233" height="321" rx="2" fill="none" stroke="${RED}" stroke-width="10"/>
        <path d="M1123 442L1000 482" stroke="${RED}" stroke-width="6" stroke-linecap="round"/>
        <path d="M996 484L1008 472L1012 484Z" fill="${RED}"/>
        <!-- origin marker -->
        <path d="M558.500 786V760" stroke="#1fe01f" stroke-width="4"/><path d="M558.500 752l5 10h-10z" fill="#1fe01f"/>
        <path d="M558 786H580" stroke="#ff0000" stroke-width="3"/><path d="M588 786l-10-5v10z" fill="#ff0000"/>
        <circle cx="558.500" cy="786" r="5.500" fill="#0000d0"/>
        <text x="553.500" y="754" font-size="13" fill="#1fe01f">Y</text>
        <text x="591" y="791" font-size="14" fill="#ff2020">X</text>
        <path d="M1044 835h99v1h-99z" fill="#5e6a70"/>
      </svg>
      <gtj-popup></gtj-popup>
      <gtj-viewbar></gtj-viewbar>`;
  }
}

class GtjViewbar extends GtjBase {
  constructor() {
    super();
    const cube = (y, face, label = "") => `
      <path d="M4 ${y + 5}l5-5h19v18l-5 5H4z" fill="${face}" stroke="#444"/>
      <path d="M4 ${y + 5}h19v18M23 ${y + 5}l5-5" fill="none" stroke="#444"/>
      ${label}`;
    const arrow = y => `<path d="M12 ${y}h6l-3 3z" fill="#333"/>`;
    this.shadowRoot.innerHTML = `
      <style>:host { position: absolute; right: 0; top: 0; width: 33px; height: 227px; background: #8e9296; border-left: 1px solid #aaa; box-sizing: border-box; }</style>
      <svg width="33" height="227" viewBox="0 0 33 227">
        <ellipse cx="17" cy="22" rx="10" ry="8" fill="#cfd6de" stroke="#555"/>
        <circle cx="24" cy="17" r="5" fill="#eef2f5" stroke="#777"/>
        <ellipse cx="15" cy="26" rx="12" ry="5" fill="none" stroke="#444"/>
        ${cube(40, "#7c8a9c", `<text x="12" y="61" font-size="8" fill="#222" font-family="Liberation Sans">3D</text>`)}
        ${cube(69, "#cfe6ff")}${arrow(100)}
        ${cube(108, "#7c8a9c")}${arrow(139)}
        <path d="M26 157a10 10 0 1 0 2 8" fill="none" stroke="#333" stroke-width="2"/><path d="M23 152l6 1-2 6z" fill="#333"/>${arrow(182)}
        <path d="M4 186h26" stroke="#666"/>
        <rect x="4" y="192" width="24" height="22" rx="2" fill="#7c8a9c" stroke="#444"/>
        <path d="M7 200h3v3H7zM7 206h3v3H7zM19 200h3v3h-3zM19 206h3v3h-3zM16 194v18M4 197h24" fill="none" stroke="#222"/>
      </svg>`;
  }
}

class GtjBeamtable extends GtjBase {
  constructor() {
    super();
    const tools = [["复制跨数据"],["粘贴跨数据",1],["输入当前列数据"],["删除当前列数据"],["页面设置"],["调换起始跨"],["悬臂钢筋代号"]];
    const cols = [7,61,61,60,81,81,82,81,81,80,101,81,102,41,61,81,11];
    const g = c => `<span class="g">${c}</span>`;
    const blanks = (n, rs) => Array.from({ length: n }, () => `<td${rs ? ` rowspan="${rs}"` : ""}></td>`).join("");
    const st = `${g("中")}8@100/`;
    this.shadowRoot.innerHTML = `
      <style>
        :host { display: flex; flex-direction: column; flex: none; width: 1170px; height: 208px; box-sizing: border-box; margin-left: 3px; border: 1px solid #c4c6c8; border-top: 0; border-left: 0; position: relative; }
        ${STRIP}
        .ttl { height: 20px; line-height: 21px; }
        #bar { height: 29px; background: #f0f0f0; border-bottom: 1px solid #c8cacc; display: flex; align-items: center; padding-left: 7px; gap: 8px; color: #444; flex: none; box-sizing: border-box; }
        #clip { height: 132px; overflow: hidden; flex: none; }
        table { border-collapse: collapse; table-layout: fixed; width: ${cols.reduce((a, b) => a + b)}px; margin-left: 2px; }
        th { background: #f0f0f0; font-weight: 400; color: #444; border: 1px solid #d0d0d0; height: 15px; padding: 0; white-space: nowrap; overflow: hidden; }
        td { border: 1px solid #d6d6d6; height: 21px; padding: 0 0 0 3px; white-space: nowrap; overflow: hidden; box-sizing: border-box; color: #222; }
        td.n { background: #f0f0f0; padding: 0; font-size: 11px; }
        td.top { vertical-align: top; }
        td.last, th.last { border-top: 0; border-bottom: 0; background: #fff; }
        .g { font-size: 10px; position: relative; top: -2px; margin: 0 1px; }
        #v { position: absolute; right: 3px; top: 77px; width: 8px; height: 45px; background: #c8c8c8; border-radius: 4px; }
        #h { position: absolute; left: 327px; top: 197px; width: 465px; height: 8px; background: #c8c8c8; border-radius: 4px; }
      </style>
      <div class="strip"></div>
      <div class="ttl" style="padding-left:10px">梁平法表格</div>
      <div id="bar">${tools.map(([t, d]) => `<span ${d ? 'style="color:#bbb"' : ""}>${t}</span>`).join("")}</div>
      <div id="clip">
      <table>
        <colgroup>${cols.map(w => `<col style="width:${w}px">`).join("")}</colgroup>
        <tr><th rowspan="2"></th><th rowspan="2">位置</th><th rowspan="2">名称</th><th rowspan="2">跨号</th><th></th><th rowspan="2">上通长筋</th><th colspan="3">上部钢筋</th><th colspan="2">下部钢筋</th><th colspan="3">侧面钢筋</th><th rowspan="2">箍筋</th><th rowspan="2">胶数</th><th rowspan="2" class="last"></th></tr>
        <tr><th>距左边线距离</th><th>左支座钢筋</th><th>跨中钢筋</th><th>右支座钢筋</th><th>下通长筋</th><th>下部钢筋</th><th>侧面通长筋</th><th>侧面原位标注筋</th><th>拉筋</th></tr>
        <tr><td class="n">1</td><td rowspan="5" class="top" style="padding:60px 0 0 4px;line-height:17px;white-space:normal">&lt;1-49,J +1900;1/</td><td rowspan="5" class="top" style="padding:87px 0 0 3px;line-height:17px">KL1(7)</td><td rowspan="2">1</td><td>46.9</td><td rowspan="2">3${g("虫")}14</td>${blanks(2, 2)}<td rowspan="2">2${g("虫")}16</td>${blanks(5, 2)}<td rowspan="2">${st}</td><td rowspan="2">2</td><td rowspan="2" class="last"></td></tr>
        <tr><td class="n">2</td><td>158.9</td></tr>
        <tr><td class="n">3</td><td>2</td><td>158.9</td>${blanks(2)}<td>2${g("虫")}16</td>${blanks(6)}<td>${st}</td><td>2</td><td class="last"></td></tr>
        <tr><td class="n">4</td><td>3</td><td>158.9</td>${blanks(9)}<td>${st}</td><td>2</td><td class="last"></td></tr>
        <tr><td class="n">5</td><td></td><td>158.9</td>${blanks(11)}<td class="last"></td></tr>
      </table>
      </div>
      <div id="v"></div><div id="h"></div>`;
  }
}

class GtjDisplay extends GtjBase {
  constructor() {
    super();
    // level, label, state of 显示图元, state of 显示标注
    const R = [
      [0,"所有构件","part"],[1,"轴线","on","dis"],[2,"轴网","on","dis"],[2,"辅助轴线","on","dis"],
      [1,"柱","part"],[2,"柱","on"],[2,"构造柱","on"],[2,"砌体柱","off"],
      [1,"墙","part"],[2,"剪力墙","on"],[2,"人防门框墙","on"],[2,"砌体墙","on"],[2,"砌体加筋","off"],[2,"保温墙","off"],[2,"暗梁","off"],[2,"墙垛","off"],[2,"幕墙","on"],
      [1,"门窗洞","off"],[2,"门","off"],[2,"窗","off"],[2,"门联窗","off"],[2,"墙洞","off"],[2,"带形窗","off"],[2,"带形洞","off"],[2,"飘窗","off"],[2,"老虎窗","off"],[2,"过梁","off"],[2,"壁龛","off"],
      [1,"梁","on"],[2,"梁","on"],[2,"连梁","on"],[2,"圈梁","on"],
      [1,"板","part"],[2,"现浇板","on"],[2,"螺旋板","off"],[2,"柱帽","off"]
    ];
    const row = ([lv, t, a, b = "off"]) => `
      <div class="row">
        <div class="nm l${lv}">${lv < 2 ? '<span class="box"></span>' : "<u></u>"}<span>${t}</span></div>
        <div class="c"><gtj-check state="${a}"></gtj-check></div>
        <div class="c"><gtj-check state="${b}"></gtj-check></div>
      </div>`;
    this.shadowRoot.innerHTML = `
      <style>
        :host { display: flex; flex-direction: column; height: 883px; box-sizing: border-box; border-left: 1px solid #c4c6c8; overflow: hidden; }
        ${STRIP}
        .strip::after { content: none; }
        #tabs { height: 28px; display: flex; align-items: flex-end; padding-left: 3px; gap: 3px; background: #f0f0f0; flex: none; box-sizing: border-box; border-bottom: 1px solid #c8cacc; }
        #tabs div { height: 23px; line-height: 25px; width: 74px; text-align: center; color: #666; background: #e3e3e3; border-radius: 3px 3px 0 0; }
        #tabs div.on { background: #fff; color: #3c90e8; border: 1px solid #d0d0d0; border-bottom: 0; box-sizing: border-box; height: 24px; margin-bottom: -1px; }
        #tb { margin: 2px 0 0 2px; width: 240px; height: 780px; overflow: hidden; flex: none; border-left: 1px solid #ccc; border-bottom: 2px solid #ccc; box-sizing: border-box; }
        .row { display: grid; grid-template-columns: 121px 63px 56px; height: 21px; box-sizing: border-box; border-bottom: 1px solid #d8d8d8; }
        .row.h { background: #f0f0f0; color: #444; border-top: 1px solid #ccc; }
        .row.h > div { text-align: center; line-height: 20px; border-right: 1px solid #d0d0d0; white-space: nowrap; }
        .nm { display: flex; align-items: center; border-right: 1px solid #d8d8d8; white-space: nowrap; position: relative; }
        .c { display: flex; align-items: center; justify-content: center; border-right: 1px solid #d8d8d8; }
        .c:last-child { justify-content: flex-start; padding-left: 18px; border: 0; }
        .box { width: 11px; height: 11px; border: 1px solid #8d8d8d; border-radius: 2px; margin-right: 6px; position: relative; background: #fff; flex: none; }
        .box::after { content: ""; position: absolute; left: 3px; top: 5px; width: 5px; height: 1px; background: #444; }
        .l0 { padding-left: 3px; }
        .l1 { padding-left: 13px; }
        .l2 { padding-left: 19px; }
        u { width: 17px; height: 1px; background: #e2e2e2; margin-right: 6px; flex: none; }
        .l2::before { content: ""; position: absolute; left: 19px; top: 0; bottom: 0; width: 1px; background: #e2e2e2; }
        .l1::before { content: ""; position: absolute; left: 19px; top: 0; height: 4px; width: 1px; background: #e2e2e2; }
        #reset { margin: 7px 0 0 170px; width: 80px; height: 26px; line-height: 24px; border: 1px solid #ccc; border-radius: 3px; box-sizing: border-box; padding-left: 8px; background: #fff; white-space: nowrap; flex: none; }
      </style>
      <div class="strip"></div>
      <div class="ttl">显示设置</div>
      <div id="tabs"><div class="on">图元显示</div><div>楼层显示</div></div>
      <div id="tb">
        <div class="row h"><div>图层构件</div><div>显示图元</div><div>显示标注</div></div>
        ${R.map(row).join("")}
      </div>
      <div id="reset">恢复默认</div>`;
  }
}

class GtjStatus extends GtjBase {
  constructor() {
    super();
    this.shadowRoot.innerHTML = `
      <style>
        :host { display: block; position: relative; height: 31px; background: #dedee0; color: #444; white-space: nowrap; }
        span { position: absolute; top: 10px; }
        .b { position: absolute; top: 4px; height: 25px; box-sizing: border-box; border: 1px solid #9a9ca0; background: #d2d3d6; display: flex; align-items: center; justify-content: center; gap: 4px; }
        .w { background: #fff; border: 1px solid #2f8fe8; }
        i { width: 0; height: 0; border: 3px solid transparent; border-top: 4px solid #666; border-bottom: 0; }
      </style>
      <span style="left:1px;font-size:13px;top:9px;word-spacing:1px">X = -4091 Y = 29936</span>
      <span style="left:264px">层高： 3.9</span>
      <span style="left:347px">标高： 5~8.9</span>
      <span style="left:480px">1(1)</span>
      <span style="left:583px">隐藏：0</span>
      <div class="b" style="left:686px;width:25px"><svg width="14" height="14" viewBox="0 0 14 14"><path d="M2 1v11h11M2 7h6v5" fill="none" stroke="#333"/></svg></div>
      <div class="b w" style="left:714px;width:36px"><svg width="16" height="18" viewBox="0 0 16 18"><path d="M3 3h12v14H3z" fill="#fff" stroke="#3d8ede"/><path d="M0 0h5v5H0z" fill="#f0802c"/></svg><i></i></div>
      <div class="b" style="left:756px;width:24px;background:#dcdcde"><svg width="16" height="16" viewBox="0 0 16 16"><path d="M1 1l14 14M15 1L1 15" stroke="#9a9a9a"/></svg></div>
      <div class="b" style="left:787px;width:36px"><svg width="16" height="14" viewBox="0 0 16 14"><path d="M1 13L11 3M1 13h14" fill="none" stroke="#333"/><path d="M6 8l2 5" stroke="#333"/></svg><i></i></div>
      <div class="b w" style="left:826px;width:36px"><svg width="16" height="16" viewBox="0 0 16 16"><path d="M4 1v6M1 4h6" stroke="#3d8ede"/><path d="M6 11h10v4H6z" fill="#3d8ede"/></svg><i></i></div>
      <div class="b" style="left:865px;width:73px">跨图层选择</div>
      <div class="b" style="left:941px;width:61px">折线选择</div>
      <span style="left:1008px">左键选择梁原位标注 ( 按ctrl+左键切换原位标注框 ) &lt;右键确认/Esc放弃&gt;</span>
      <span style="left:1838px;font-size:13px;top:9px">200 F</span>`;
  }
}

class GtjIme extends GtjBase {
  constructor() {
    super();
    this.shadowRoot.innerHTML = `
      <style>
        :host { position: absolute; left: 78px; top: 1002px; width: 185px; height: 27px; display: flex; align-items: flex-end; }
        #s { position: absolute; left: 0; top: 0; width: 27px; height: 26px; border-radius: 3px; background: #f4511e; color: #fff; transform: rotate(8deg); font: italic 700 22px/26px "Liberation Sans", sans-serif; text-align: center; z-index: 1; }
        #bar { margin-left: 22px; width: 163px; height: 24px; border: 1px solid #a9c4dc; background: #f4f8fb; box-sizing: border-box; display: flex; align-items: center; gap: 7px; padding-left: 10px; }
        #a { color: #2a7fd0; font: 700 17px/20px "Liberation Sans", sans-serif; }
        #wr { margin-left: auto; width: 23px; height: 22px; display: flex; align-items: center; justify-content: center; background: #e6e9ec; }
      </style>
      <div id="s">S</div>
      <div id="bar">
        <span id="a">A</span>
        <svg width="14" height="14" viewBox="0 0 14 14"><path d="M9 0a7 7 0 1 1-9 9 6 6 0 0 0 9-9z" fill="#2a7fd0"/></svg>
        <svg width="12" height="12" viewBox="0 0 12 12"><circle cx="2" cy="3" r="1.500" fill="#2a7fd0"/><path d="M9 5a2 2 0 0 1 0 3l-1 2" fill="none" stroke="#2a7fd0" stroke-width="1.500"/></svg>
        <svg width="16" height="12" viewBox="0 0 16 12"><rect width="16" height="12" rx="1" fill="#2a7fd0"/><path d="M2 3h12M2 6h12" stroke="#fff" stroke-dasharray="1.500 1"/><path d="M4 9h8" stroke="#fff"/></svg>
        <svg width="14" height="15" viewBox="0 0 14 15"><circle cx="6" cy="3" r="3" fill="#9db4cc"/><path d="M1 13a5 5 0 0 1 10 0z" fill="#9db4cc"/><path d="M8 9h6v6H8z" fill="#fff" stroke="#9db4cc"/></svg>
        <svg width="14" height="14" viewBox="0 0 14 14"><path d="M4 0h6l4 4-2 2-1-1v9H3V5L2 6 0 4z" fill="#1f78d1"/></svg>
        <div id="wr"><svg width="15" height="15" viewBox="0 0 15 15"><path d="M2 13l6-6a4 4 0 0 1 5-5l-2 2 2 2 2-2a4 4 0 0 1-5 5l-6 6z" fill="#b96a4a"/></svg></div>
      </div>`;
  }
}

// children first, so the nested shadow roots upgrade on insertion
customElements.define("gtj-icon", GtjIcon);
customElements.define("gtj-check", GtjCheck);
customElements.define("gtj-popup", GtjPopup);
customElements.define("gtj-viewbar", GtjViewbar);
customElements.define("rb-item", RbItem);
customElements.define("rb-col", RbCol);
customElements.define("rb-big", RbBig);
customElements.define("rb-group", RbGroup);
customElements.define("gtj-ribbon", GtjRibbon);
customElements.define("gtj-rail", GtjRail);
customElements.define("gtj-titlebar", GtjTitlebar);
customElements.define("gtj-combos", GtjCombos);
customElements.define("gtj-nav", GtjNav);
customElements.define("gtj-drawings", GtjDrawings);
customElements.define("gtj-layers", GtjLayers);
customElements.define("gtj-canvas", GtjCanvas);
customElements.define("gtj-beamtable", GtjBeamtable);
customElements.define("gtj-display", GtjDisplay);
customElements.define("gtj-status", GtjStatus);
customElements.define("gtj-ime", GtjIme);
customElements.define("gtj-workspace", GtjWorkspace);
customElements.define("gtj-app", GtjApp);
</script>
</body>
</html>
